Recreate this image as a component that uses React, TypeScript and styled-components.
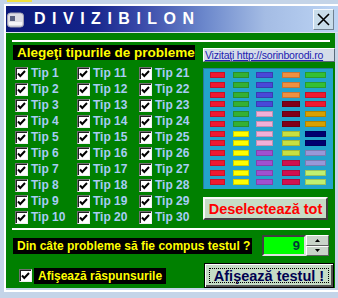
import React from 'react';
import styled, { createGlobalStyle } from 'styled-components';

const GlobalStyle = createGlobalStyle`
  html, body {
    margin: 0;
    padding: 0;
  }
  body {
    width: 338px;
    height: 298px;
    overflow: hidden;
    background: #c4d4e8;
    font-family: "Liberation Sans", Arial, sans-serif;
  }
  * {
    box-sizing: border-box;
  }
`;

const Screen = styled.div`
  width: 338px;
  height: 298px;
  display: flex;
  flex-direction: column;
`;

const TopStrip = styled.div`
  height: 4px;
  display: flex;
`;

const YellowChunk = styled.div`
  margin-left: 7px;
  width: 25px;
  height: 2px;
  background: #f0e040;
`;

const Frame = styled.div`
  margin-left: 4px;
  width: 334px;
  border-left: 2px solid #ffffff;
  border-top: 2px solid #ffffff;
  display: flex;
  flex-direction: column;
`;

const TitleBar = styled.div`
  height: 26px;
  display: flex;
  align-items: center;
  padding: 0 4px 0 1px;
  background: linear-gradient(90deg, #0a1878 0%, #14238a 25%, #3848a8 40%, #6c88cc 60%, #a4bce4 78%, #bcd4f4 100%);
`;

const TitleText = styled.div`
  margin-left: 10px;
  color: #ffffff;
  font-weight: bold;
  font-size: 16px;
  letter-spacing: 6.5px;
`;

const CloseButton = styled.div`
  margin-left: auto;
  width: 21px;
  height: 21px;
  display: flex;
  align-items: center;
  justify-content: center;
  background: #c8dcea;
  border: 1px solid;
  border-color: #f4f8fc #708090 #708090 #f4f8fc;
`;

const Separator = styled.div`
  height: 1px;
  background: #d8e0ec;
`;

const Panel = styled.div`
  width: 329px;
  height: 255px;
  background: #008000;
  padding: 7px 0 0 6px;
  display: flex;
  flex-direction: column;
`;

const Rule = styled.div<{ mt?: number }>`
  width: 318px;
  height: 2px;
  background: #ffffff;
  margin-top: ${p => p.mt || 0}px;
`;

const Main = styled.div`
  display: flex;
  margin-top: 3px;
  height: 182px;
`;

const LeftColumn = styled.div`
  width: 191px;
  display: flex;
  flex-direction: column;
`;

const BlackLabel = styled.div<{ w: number; fs?: number; ml?: number }>`
  width: ${p => p.w}px;
  height: 16px;
  margin-left: ${p => p.ml || 0}px;
  background: #000000;
  color: #ffff00;
  font-weight: bold;
  font-size: ${p => p.fs || 12}px;
  line-height: 16px;
  padding-left: 4px;
  white-space: nowrap;
`;

const HeadLabel = styled(BlackLabel)`
  height: 15px;
  line-height: 15px;
`;

const TipGrid = styled.div`
  margin-top: 7px;
  display: grid;
  grid-auto-flow: column;
  grid-template-columns: repeat(3, 62px);
  grid-template-rows: repeat(10, 16px);
`;

const TipItem = styled.div`
  display: flex;
  align-items: flex-start;
  padding-left: 3px;
`;

const TipLabel = styled.span`
  margin-left: 3px;
  color: #a8cdf5;
  font-weight: bold;
  font-size: 12px;
  line-height: 13px;
  white-space: pre;
`;

const CheckBox = styled.div`
  width: 13px;
  height: 13px;
  background: #ffffff;
  border: 1px solid;
  border-color: #707070 #f0f0f0 #f0f0f0 #707070;
  box-shadow: inset 1px 1px 0 #202020;
  display: flex;
  align-items: center;
  justify-content: center;
  flex-shrink: 0;
`;

const RightColumn = styled.div`
  width: 131px;
  display: flex;
  flex-direction: column;
`;

const LinkButton = styled.div`
  margin-top: 3px;
  width: 132px;
  height: 14px;
  background: #d4dce8;
  border: 1px solid;
  border-color: #ffffff #5a6a7a #5a6a7a #ffffff;
  color: #2020b0;
  font-size: 10.5px;
  letter-spacing: -0.2px;
  line-height: 12px;
  text-decoration: underline;
  white-space: nowrap;
  padding-left: 1px;
  overflow: hidden;
`;

const Palette = styled.div`
  margin-top: 6px;
  width: 130px;
  height: 121px;
  background: #22a4cc;
  border-left: 1px solid #2a78a0;
  border-top: 1px solid #2a78a0;
  padding: 3px 0 0 6px;
  display: grid;
  grid-auto-flow: column;
  grid-template-columns: 23px 23px 26px 23px 1fr;
  grid-template-rows: repeat(12, 6px);
  row-gap: 3.75px;
`;

const Swatch = styled.div<{ w: number; c: string }>`
  width: ${p => p.w}px;
  height: 6px;
  background: ${p => p.c};
  box-shadow: inset 0 0 0 1px rgba(0, 0, 0, 0.18);
`;

const RaisedButton = styled.div<{ w: number; h: number; color: string }>`
  width: ${p => p.w}px;
  height: ${p => p.h}px;
  background: #c6dcc6;
  color: ${p => p.color};
  font-weight: bold;
  font-size: 14.5px;
  display: flex;
  align-items: center;
  justify-content: center;
  white-space: nowrap;
`;

const DeselectButton = styled(RaisedButton)`
  margin-top: 8px;
  border: 2px solid;
  border-color: #f8f8f8 #404040 #404040 #f8f8f8;
`;

const DefaultButton = styled(RaisedButton)`
  margin-left: 38px;
  border: 1px solid #000000;
  box-shadow: inset 1px 1px 0 #ffffff, inset -2px -2px 0 #505050;
  position: relative;
`;

const FocusRing = styled.div`
  position: absolute;
  inset: 4px;
  border: 1px dotted #000000;
`;

const QuestionRow = styled.div`
  margin-top: 5px;
  height: 21px;
  display: flex;
  align-items: center;
`;

const Spin = styled.div`
  margin-left: 10px;
  display: flex;
  height: 21px;
`;

const SpinField = styled.div`
  width: 44px;
  height: 21px;
  background: #00ff00;
  border: 2px solid;
  border-color: #404040 #e0e0e0 #e0e0e0 #404040;
  color: #003838;
  font-weight: bold;
  font-size: 13px;
  line-height: 17px;
  text-align: right;
  padding-right: 4px;
`;

const SpinButtons = styled.div`
  width: 23px;
  display: flex;
  flex-direction: column;
`;

const SpinArrow = styled.div`
  flex: 1;
  background: #c8d4c8;
  border: 1px solid;
  border-color: #ffffff #606060 #606060 #ffffff;
  display: flex;
  align-items: center;
  justify-content: center;
`;

const LastRow = styled.div`
  margin-top: 7px;
  height: 25px;
  display: flex;
  align-items: center;
`;

const AnswerCheck = styled.div`
  margin-left: 7px;
  margin-right: 2px;
  display: flex;
`;

const BottomEdge = styled.div`
  margin-top: 2px;
  height: 2px;
  background: #ffffff;
`;

const palette: string[][] = [
  Array(12).fill('#f01830'),
  [...Array(6).fill('#34b034'), ...Array(6).fill('#ffff00')],
  [...Array(4).fill('#4848d8'), ...Array(4).fill('#f0b0d8'), ...Array(4).fill('#a050d0')],
  [...Array(3).fill('#f09040'), ...Array(3).fill('#800018'), ...Array(3).fill('#c8e040'), ...Array(3).fill('#d01050')],
  ['#34c034', '#34c034', '#f01830', '#f01830', '#d8a000', '#d8a000', '#000070', '#000070', '#9898d8', '#9898d8', '#c0f070', '#c0f070'],
];
const swatchWidths = [15, 16, 17, 18, 21];

const Check = () => (
  <svg width="9" height="8" viewBox="0 0 9 8">
    <polyline points="1,3.5 3.3,6 8,1" fill="none" stroke="#000" strokeWidth="2" />
  </svg>
);

const Box = () => (
  <CheckBox>
    <Check />
  </CheckBox>
);

const AppIcon = () => (
  <svg width="17" height="19" viewBox="0 0 17 19">
    <rect x="0.5" y="3" width="16" height="14" rx="3" fill="#dcdce4" stroke="#a0a0b4" />
    <rect x="3" y="6" width="5" height="5" fill="#586080" />
    <rect x="2" y="12" width="13" height="3" fill="#f4f4f8" />
  </svg>
);

const Arrow = ({ up }: { up?: boolean }) => (
  <svg width="5" height="3" viewBox="0 0 5 3">
    <polygon points={up ? '2.5,0 5,3 0,3' : '0,0 5,0 2.5,3'} fill="#000" />
  </svg>
);

export default function App() {
  const tips = [...Array(30)].map((_, i) => i + 1);

  return (
    <>
      <GlobalStyle />
      <Screen>
        <TopStrip>
          <YellowChunk />
        </TopStrip>
        <Frame>
          <TitleBar>
            <AppIcon />
            <TitleText>DIVIZIBILON</TitleText>
            <CloseButton>
              <svg width="13" height="13" viewBox="0 0 13 13">
                <path d="M1 1 L12 12 M12 1 L1 12" stroke="#000" strokeWidth="1.6" />
              </svg>
            </CloseButton>
          </TitleBar>
          <Separator />
          <Panel>
            <Rule />
            <Main>
              <LeftColumn>
                <HeadLabel w={182} fs={13.5} ml={1}>Alegeţi tipurile de probleme</HeadLabel>
                <TipGrid>
                  {tips.map(n => (
                    <TipItem key={n}>
                      <Box />
                      <TipLabel>{`Tip ${n}`}</TipLabel>
                    </TipItem>
                  ))}
                </TipGrid>
              </LeftColumn>
              <RightColumn>
                <LinkButton>Vizitaţi http://sorinborodi.ro</LinkButton>
                <Palette>
                  {palette.map((col, ci) =>
                    col.map((c, ri) => (
                      <Swatch key={`${ci}-${ri}`} w={swatchWidths[ci]} c={c} />
                    )),
                  )}
                </Palette>
                <DeselectButton w={125} h={23} color="#ff0000">Deselectează tot</DeselectButton>
              </RightColumn>
            </Main>
            <Rule mt={1} />
            <QuestionRow>
              <BlackLabel w={239} ml={1}>Din câte probleme să fie compus testul ?</BlackLabel>
              <Spin>
                <SpinField>9</SpinField>
                <SpinButtons>
                  <SpinArrow><Arrow up /></SpinArrow>
                  <SpinArrow><Arrow /></SpinArrow>
                </SpinButtons>
              </Spin>
            </QuestionRow>
            <LastRow>
              <AnswerCheck>
                <Box />
              </AnswerCheck>
              <BlackLabel w={132}>Afişează răspunsurile</BlackLabel>
              <DefaultButton w={130} h={25} color="#000050">
                <FocusRing />
                Afişează testul !
              </DefaultButton>
            </LastRow>
          </Panel>
          <BottomEdge />
        </Frame>
      </Screen>
    </>
  );
}
